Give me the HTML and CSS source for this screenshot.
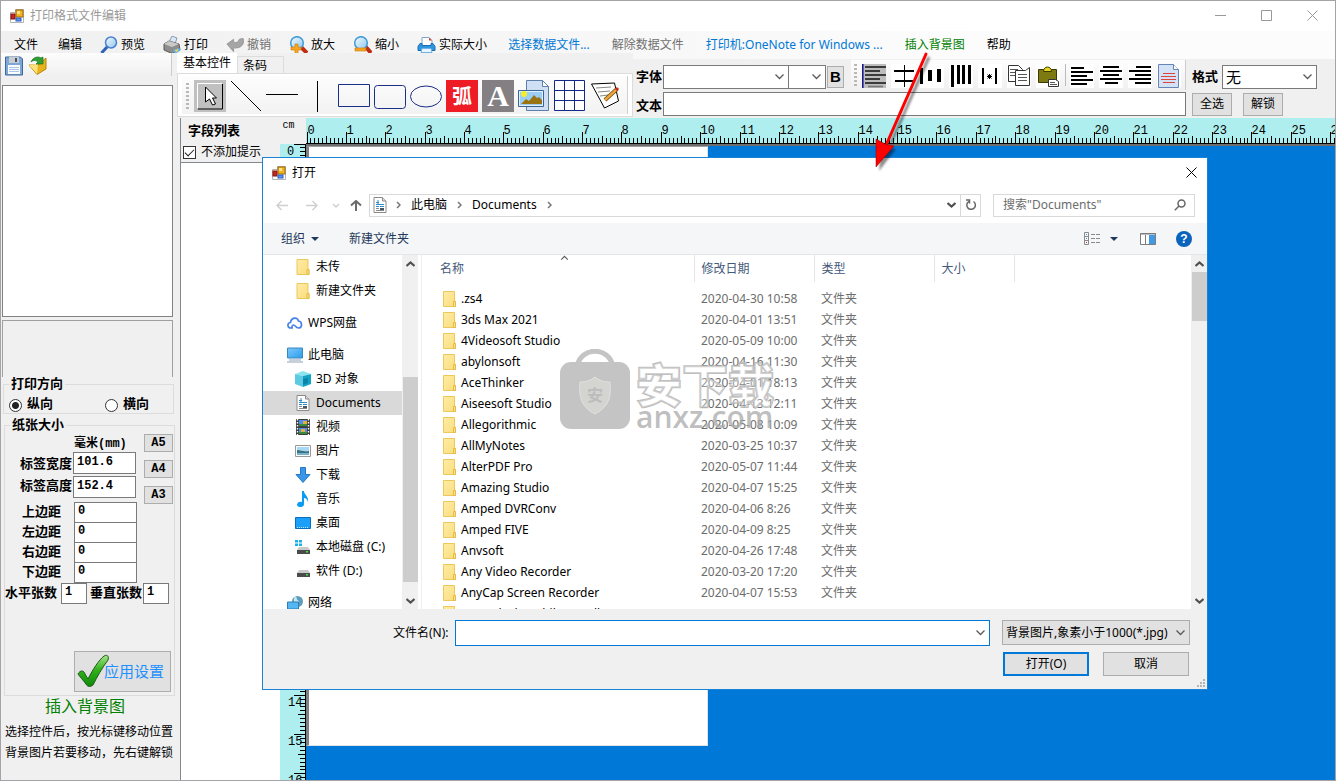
FILE: index.html
```html
<!DOCTYPE html>
<html lang="zh-CN">
<head>
<meta charset="utf-8">
<title>打印格式文件编辑</title>
<link rel="stylesheet" href="styles.css">
</head>
<body>
<svg class="sprite" aria-hidden="true">
  <defs>
    <linearGradient id="g-folder" x1="0" y1="0" x2="1" y2="1"><stop offset="0" stop-color="#ffeda6"/><stop offset="1" stop-color="#f9dc7c"/></linearGradient>
    <linearGradient id="g-glass" x1="0" y1="0" x2="1" y2="1"><stop offset="0" stop-color="#f4fbff"/><stop offset="1" stop-color="#8ec6ee"/></linearGradient>
    <linearGradient id="g-sky" x1="0" y1="0" x2="1" y2="1"><stop offset="0" stop-color="#7cc8f8"/><stop offset="1" stop-color="#2a9df0"/></linearGradient>
    <linearGradient id="g-check" x1="0" y1="0" x2="0" y2="1"><stop offset="0" stop-color="#a6e48c"/><stop offset=".45" stop-color="#35b21c"/><stop offset="1" stop-color="#0d8a08"/></linearGradient>
    <symbol id="i-app" viewBox="0 0 14 14"><path fill="#fff" stroke="#b4b4b4" d="M.5 3.500h5v-3h8v13H.5z"/><rect x="6" y="1" width="7" height="7" fill="#f4b422" stroke="#9d6c08"/><rect x="7" y="2" width="3" height="3" fill="#ffe28a"/><rect x="1" y="5" width="4" height="5" fill="#c62a1d" stroke="#8a120c"/><rect x="6" y="9" width="5" height="3" fill="#5d95ee" stroke="#2a5fc4"/></symbol>
    <symbol id="i-folder" viewBox="0 0 13 16"><path fill="url(#g-folder)" stroke="#ecc75a" d="M.5.5h11v10h1v5H.5z"/><path fill="#fbe28c" stroke="#e6bb45" d="M10.500 10.500h2v5h-2z"/></symbol>
    <symbol id="i-search" viewBox="0 0 18 18"><path d="M7.500 10.500 1.500 17" stroke="#2f62b4" stroke-width="3"/><circle cx="11" cy="6.500" r="5.500" fill="url(#g-glass)" stroke="#4b80cf" stroke-width="1.500"/></symbol>
    <symbol id="i-printer" viewBox="0 0 18 18"><path d="m6 6 3-6 5 2-2 6z" fill="#d8e6f5" stroke="#8a9bb0"/><path d="m1 8 5-3 10 3 1 6-8 3.500L1 14z" fill="#8d8d8d" stroke="#5b5b5b"/><path d="m1 8 5-3 10 3-7 3z" fill="#c9c9c9"/><path d="m10 14 6-2 2 2-6 4z" fill="#62b4e8"/><path d="m12 14 3-1v2l-2 1z" fill="#f5d23e"/></symbol>
    <symbol id="i-undo" viewBox="0 0 19 16"><path fill="#a5a5a5" stroke="#979797" d="m1 7 7-5v3c3 1 5 0 6-3l4-1c2 6-2 11-10 10v4z"/></symbol>
    <symbol id="i-zoomin" viewBox="0 0 19 18"><path d="m11 10 7 7" stroke="#c22c10" stroke-width="4"/><circle cx="8" cy="7" r="6.300" fill="url(#g-glass)" stroke="#3f9ad4" stroke-width="1.500"/><path fill="#f7a420" stroke="#c87a0b" stroke-width=".6" d="M6 8h3v3h3v3H9v4H6v-4H2v-3h4z"/></symbol>
    <symbol id="i-zoomout" viewBox="0 0 19 18"><path d="m12 10 6 7" stroke="#c22c10" stroke-width="4"/><circle cx="8" cy="7" r="6.300" fill="url(#g-glass)" stroke="#3f9ad4" stroke-width="1.500"/><path fill="#f7a420" stroke="#c87a0b" stroke-width=".6" d="M2 12h11v3H2z"/></symbol>
    <symbol id="i-print2" viewBox="0 0 19 17"><path fill="#fff" stroke="#7fa6cf" d="M5 1h7l3 3v5H5z"/><path d="M12 1v3h3z" fill="#d23b2b"/><path fill="#2f96dd" stroke="#1d6db2" d="M3 7h2v2h9V7h2l2 3v4H1v-4z"/><path fill="#e8f5ff" stroke="#6fb1e6" d="M5 12h9l1 4H4z"/></symbol>
    <symbol id="i-save" viewBox="0 0 20 20"><path fill="#7ca6d8" stroke="#3e679c" d="M1.500 1h15l2 2v16h-17z"/><path fill="#c9ccd0" d="M5 1h10v6H5z"/><path fill="#4a5058" d="M11 2h2v4h-2z"/><path fill="#fafdff" d="M4 9h12v9H4z"/><path d="M5 11.500h10M5 13.500h10M5 15.500h10" stroke="#a9c6e6"/></symbol>
    <symbol id="i-open" viewBox="0 0 20 20"><path fill="#e8b21c" stroke="#b98508" d="m1 9 8 9.500L18 13V2l-8 7z"/><path fill="#ffe27c" d="m1 9 8 9 1-10z"/><path fill="#2f9e33" stroke="#17711e" stroke-width=".7" d="M3 6C5 1 10 0 13 2l2-1v7H8l2-2C8 4 5 4 3 6z"/></symbol>
    <symbol id="i-doc" viewBox="0 0 14 16"><path fill="#fff" stroke="#8b8b8b" d="M1 .5h8.500L13 4v11.500H1z"/><path fill="#ddd" stroke="#8b8b8b" d="M9.500.5V4H13"/><path d="M3 5.500h3M3 7.500h8M3 9.500h3M7 9.500h4" stroke="#2a8cc9"/><path d="M5 3v4" stroke="#2a8cc9"/><path d="M3 11.500h3M3 13.500h8" stroke="#888"/><path fill="#456" d="M7 11h4v2H7z"/></symbol>
    <symbol id="i-cloud" viewBox="0 0 16 14"><path fill="none" stroke="#4a83e8" stroke-width="1.700" d="M6 12H4C0 12 0 7 3.500 6.500 4 2 10 0 11.500 5c4 .5 4 7 0 7-3 0-3-3-5-3-1.500 0-2 2-1 3"/></symbol>
    <symbol id="i-pc" viewBox="0 0 16 15"><path fill="url(#g-sky)" stroke="#3a86bd" d="M.5.500h15v10H.5z"/><path stroke="#8ba1b5" d="M2 12.500h12M0 14.500h16" /></symbol>
    <symbol id="i-cube" viewBox="0 0 16 16"><path fill="#8de4ef" d="m0 3 8-3 8 3-8 2z"/><path fill="#5ccbe2" d="m0 3 8 2v11l-8-3z"/><path fill="#12a2c4" d="m16 3-8 2v11l8-3z"/><path fill="#0c83a8" d="m8 8 5-1v5l-5 2z"/></symbol>
    <symbol id="i-video" viewBox="0 0 14 16"><path fill="#3e3e3e" d="M0 0h14v16H0z"/><path fill="#4d8ff0" d="M3 1h8v6H3zM3 9h8v6H3z"/><path fill="#e4b22c" d="M7 2h4v3H7zM5 10h4v3H5z"/><path fill="#3b8b3c" d="M3 5h8v2H3zM3 13h8v2H3z"/><path stroke="#fff" stroke-width="1.400" stroke-dasharray="1.500 1.500" d="M1.500 0v16M12.500 0v16"/></symbol>
    <symbol id="i-pic" viewBox="0 0 16 12"><path fill="#fff" stroke="#9a9a9a" d="M.5.500h15v11H.5z"/><path fill="#a7d8f5" d="M2 2h12v4H2z"/><path fill="#3a7381" d="M2 5c4 0 6 2 12 1v2H2z"/><path fill="#7ab3c9" d="M2 8h12v2H2z"/></symbol>
    <symbol id="i-down" viewBox="0 0 16 16"><path fill="#3a96e8" stroke="#2578c4" d="M5.500.5h5v7h4.500L8 15.500 1 7.500h4.500z"/></symbol>
    <symbol id="i-music" viewBox="0 0 12 16"><path fill="#0a9bf2" d="M5 0h2c0 4 5 5 4 11-1-3-2-4-4-4v6c0 4-6 4-7 1 0-3 3-4 5-3z"/></symbol>
    <symbol id="i-desktop" viewBox="0 0 16 12"><path fill="#1aa0f8" stroke="#0a6fbd" d="M.5.500h15v11H.5z"/><path stroke="#bfe3fb" stroke-dasharray="1 1" d="M2 10.500h12"/></symbol>
    <symbol id="i-drivec" viewBox="0 0 16 14"><path fill="#18b0ea" d="M0 0h3v2.500H0zM4 0h3v2.500H4zM0 3.500h3V6H0zM4 3.500h3V6H4z"/><path fill="#c9c9c9" d="m4 7-2 3h13l-2-3z"/><path fill="#4b4b4b" d="M2 10h13v4H2z"/><path fill="#43e04a" d="M11 11h2v1.500h-2z"/></symbol>
    <symbol id="i-drive" viewBox="0 0 16 14"><path fill="#c9c9c9" d="m4 6-2 3h13l-2-3z"/><path fill="#4b4b4b" d="M2 9h13v4H2z"/><path fill="#43e04a" d="M11 10h2v1.500h-2z"/></symbol>
    <symbol id="i-net" viewBox="0 0 16 15"><circle cx="10.500" cy="6" r="5.500" fill="#5d9dbd"/><path fill="#c8e6f2" d="M8 1c3 1 1 3 3 4s0 4-2 3-3-4-1-7z"/><path fill="#55b7f2" stroke="#2b7fb5" d="M.5 6.500h11v7H.5z"/></symbol>
    <symbol id="i-chev" viewBox="0 0 9 6"><path fill="none" stroke="#5a5a5a" stroke-width="1.300" d="m.500.5 4 4 4-4"/></symbol>
    <symbol id="i-arr" viewBox="0 0 9 6"><path fill="none" stroke="#505050" stroke-width="2.200" d="m.500 1 4 3.500L8.500 1"/></symbol>
    <symbol id="i-crumb" viewBox="0 0 5 8"><path fill="none" stroke="#767676" stroke-width="1.500" d="m1 1 3 3-3 3"/></symbol>
  </defs>
</svg>

<div class="window">
  <header class="titlebar">
    <svg class="app-icon"><use href="#i-app"/></svg>
    <h1 class="title">打印格式文件编辑</h1>
    <button class="caption" aria-label="最小化"><svg viewBox="0 0 11 11"><path d="M0 5.500h11"/></svg></button>
    <button class="caption" aria-label="最大化"><svg viewBox="0 0 11 11"><path d="M.5.500h10v10H.5z"/></svg></button>
    <button class="caption" aria-label="关闭"><svg viewBox="0 0 11 11"><path d="m.500.500 10 10M10.500.5l-10 10"/></svg></button>
  </header>

  <nav class="menubar">
    <button class="menu">文件</button>
    <button class="menu">编辑</button>
    <button class="menu with-icon"><svg><use href="#i-search"/></svg>预览</button>
    <button class="menu with-icon"><svg><use href="#i-printer"/></svg>打印</button>
    <button class="menu with-icon muted"><svg><use href="#i-undo"/></svg>撤销</button>
    <button class="menu with-icon wide"><svg><use href="#i-zoomin"/></svg>放大</button>
    <button class="menu with-icon wide"><svg><use href="#i-zoomout"/></svg>缩小</button>
    <button class="menu with-icon wide"><svg><use href="#i-print2"/></svg>实际大小</button>
    <button class="menu plain blue">选择数据文件...</button>
    <button class="menu plain muted">解除数据文件</button>
    <button class="menu plain blue">打印机:OneNote for Windows ...</button>
    <button class="menu plain green">插入背景图</button>
    <button class="menu plain">帮助</button>
  </nav>

  <div class="workspace">
    <aside class="sidebar">
      <div class="quickbar">
        <button class="quick" aria-label="保存"><svg><use href="#i-save"/></svg></button>
        <button class="quick" aria-label="打开"><svg><use href="#i-open"/></svg></button>
      </div>
      <div class="listbox"></div>
      <div class="infobox"></div>
      <fieldset class="group">
        <legend>打印方向</legend>
        <div class="radios">
          <label class="radio"><input type="radio" name="dir" checked>纵向</label>
          <label class="radio"><input type="radio" name="dir">横向</label>
        </div>
      </fieldset>
      <fieldset class="group paper">
        <legend>纸张大小</legend>
        <div class="paper-body">
          <div class="sizes">
            <span class="unit">毫米(mm)</span>
            <label for="w">标签宽度</label><input id="w" class="field" value="101.6">
            <label class="second" for="h">标签高度</label><input id="h" class="field second" value="152.4">
          </div>
          <div class="presets">
            <button class="btn preset">A5</button>
            <button class="btn preset">A4</button>
            <button class="btn preset">A3</button>
          </div>
        </div>
        <div class="margins">
          <label for="mt">上边距</label><input id="mt" class="field" value="0">
          <label for="ml">左边距</label><input id="ml" class="field" value="0">
          <label for="mr">右边距</label><input id="mr" class="field" value="0">
          <label for="mb">下边距</label><input id="mb" class="field" value="0">
        </div>
        <div class="counts">
          <label for="ch">水平张数</label><input id="ch" class="field" value="1">
          <label for="cv">垂直张数</label><input id="cv" class="field" value="1">
        </div>
        <button class="btn apply"><svg viewBox="0 0 32 32"><path fill="url(#g-check)" stroke="#1d5c1a" d="M1 19c2-4 6-4 7 0l3 5C16 14 22 5 27 1c4-2 5 1 4 4C25 13 20 22 16 30c-2 2-6 2-7-1C6 25 3 22 1 19z"/></svg>应用设置</button>
      </fieldset>
      <p class="hint-title">插入背景图</p>
      <p class="hint">选择控件后，按光标键移动位置</p>
      <p class="hint">背景图片若要移动，先右键解锁</p>
    </aside>

    <main class="main">
      <div class="topbar">
        <section class="tabs">
          <div class="tablist">
            <button class="tab active">基本控件</button>
            <button class="tab">条码</button>
          </div>
          <div class="tabpane">
            <div class="shapes">
              <i class="grip"></i>
              <button class="shape" aria-label="选择"><svg viewBox="0 0 32 32"><path fill="#c0c0c0" d="M0 0h32v32H0z"/><path fill="none" stroke="#000" d="M28.500 4v25H4"/><path fill="none" stroke="#fff" d="M3.500 28V3.500H28"/><path fill="#fff" stroke="#000" d="M11.500 7v15l4-3 3 6 3-1-3-6h4z"/></svg></button>
              <button class="shape" aria-label="斜线"><svg viewBox="0 0 32 32"><path stroke="#000" d="m1 1 30 30"/></svg></button>
              <button class="shape" aria-label="横线"><svg viewBox="0 0 32 32"><path stroke="#000" d="M0 14.500h32"/></svg></button>
              <button class="shape" aria-label="竖线"><svg viewBox="0 0 32 32"><path stroke="#000" d="M15.500 1v31"/></svg></button>
              <button class="shape" aria-label="矩形"><svg viewBox="0 0 32 32"><path fill="none" stroke="#1a2f86" d="M.5 4.500h31v22H.5z"/></svg></button>
              <button class="shape" aria-label="圆角矩形"><svg viewBox="0 0 32 32"><rect x=".5" y="5.500" width="31" height="23" rx="3" fill="none" stroke="#1a2f86"/></svg></button>
              <button class="shape" aria-label="椭圆"><svg viewBox="0 0 32 32"><ellipse cx="16" cy="16.500" rx="15.500" ry="10.500" fill="none" stroke="#1a2f86"/></svg></button>
              <button class="shape arc">弧</button>
              <button class="shape letter">A</button>
              <button class="shape" aria-label="图片"><svg viewBox="0 0 32 32"><path fill="#cfe0f4" stroke="#5f7fab" d="M8.500.500h16l6 6v24h-22z"/><path fill="#fff" stroke="#5f7fab" d="M24.500.500v6h6z"/><path fill="#dff0ff" stroke="#3b6394" d="M.5 10.500h25v16H.5z"/><path fill="#9ccdf3" d="M2 12h22v13H2z"/><circle cx="6" cy="14" r="3" fill="#f7ee2b"/><path fill="#9a7413" d="m3 24 5-5 3 2 5-6 3 3 2-1 3 3v4z"/></svg></button>
              <button class="shape" aria-label="表格"><svg viewBox="0 0 32 32"><path fill="#fff" stroke="#12298a" d="M.5.500h30v30H.5zM.5 10.500h30M.5 20.500h30M10.500.500v30M20.500.500v30"/></svg></button>
              <button class="shape" aria-label="备注"><svg viewBox="0 0 32 32"><path fill="#fff" stroke="#000" d="m1.500 4 23-1 4 18-14 7z"/><path stroke="#888" d="m6 8 15-1M8 12l12-1M10 16l8-1"/><path stroke="#6e4610" stroke-width="4" d="m15 20 12-11"/><path stroke="#e9a63a" stroke-width="2.500" d="m15 20 12-11"/><path stroke="#c5281c" stroke-width="3" d="m26 10 2-2"/></svg></button>
            </div>
          </div>
        </section>

        <section class="texttools">
          <div class="row">
            <label class="bold" for="font">字体</label>
            <span class="select font"><select id="font"><option></option></select><svg><use href="#i-chev"/></svg></span>
            <span class="select size"><select aria-label="字号"><option></option></select><svg><use href="#i-chev"/></svg></span>
            <button class="btn boldbtn">B</button>
            <div class="align">
              <i class="grip"></i>
              <button class="tool" aria-label="左对齐控件"><svg viewBox="0 0 24 24"><path fill="#bdbdbd" d="M0 0h24v24H0z"/><path stroke="#10108a" stroke-width="1.500" d="M.8 0v24"/><path stroke="#111" stroke-width="1.600" d="M3 3h21M3 7h15M3 11h21M3 15h15M3 19h21"/><path stroke="#777" stroke-width="1.600" d="M6 22.500h15"/></svg></button>
              <button class="tool" aria-label="居中控件"><svg viewBox="0 0 24 24"><path stroke="#000" stroke-width="2" d="M3 7h20M4 17h19"/><path stroke="#000" d="M13.500 1v22"/></svg></button>
              <button class="tool" aria-label="横向分布"><svg viewBox="0 0 24 24"><path stroke="#000" stroke-width="3" d="M1.500 4v16"/><path stroke="#000" stroke-width="4" d="M10 6v11M19 5v13"/></svg></button>
              <button class="tool" aria-label="纵向分布"><svg viewBox="0 0 24 24"><path stroke="#000" stroke-width="3" d="M3.500 1v22"/><path stroke="#000" stroke-width="3" d="M9.500 1v19M14.500 1v19M20.500 1v19"/></svg></button>
              <button class="tool" aria-label="间距"><svg viewBox="0 0 24 24"><path stroke="#000" stroke-width="2" d="M5 4v16M18 4v16"/><path stroke="#000" d="M9 12.500h5M11.500 10v5M9.500 10.500l4 4M13.500 10.500l-4 4"/></svg></button>
              <button class="tool" aria-label="复制"><svg viewBox="0 0 24 24"><path fill="#fff" stroke="#333" d="M1.500 1.500h10l4 4v12h-14z"/><path stroke="#555" d="M3 5.500h8M3 8.500h10M3 11.500h10"/><path fill="#fff" stroke="#333" d="M8.500 6.500h10l4-3v18h-14z"/><path stroke="#555" d="M11 10.500h9M11 13.500h9M11 16.500h9"/></svg></button>
              <button class="tool" aria-label="粘贴"><svg viewBox="0 0 24 24"><path fill="#7d7a12" stroke="#3d3b05" d="M2.500 5.500h18v13h-18z"/><path fill="#e8d61c" stroke="#3d3b05" d="M7.500 7.500c0-6 8-6 8 0z"/><path fill="#fff" stroke="#333" d="M12.500 15.500h7l3 2v5h-10z"/><path stroke="#555" d="M14 18.500h5M14 20.500h7"/></svg></button>
              <i class="sep"></i>
              <button class="tool" aria-label="文本左对齐"><svg viewBox="0 0 24 24"><path stroke="#000" stroke-width="2" d="M1 4h13M1 8h22M1 12h16M1 16h22M1 20h16"/></svg></button>
              <button class="tool" aria-label="文本居中"><svg viewBox="0 0 24 24"><path stroke="#000" stroke-width="2" d="M4 3h16M1 7h22M4 11h16M1 15h22M6 19h13"/></svg></button>
              <button class="tool" aria-label="文本右对齐"><svg viewBox="0 0 24 24"><path stroke="#000" stroke-width="2" d="M8 3h15M1 7h22M7 11h16M1 15h22M7 19h16"/></svg></button>
              <button class="tool" aria-label="文档"><svg viewBox="0 0 24 24"><path fill="#d3e2f5" stroke="#6485b5" d="M1.500.500h15l5 5v18h-20z"/><path fill="#fff" stroke="#6485b5" d="M16.500.500v5h5"/><path stroke="#d44" d="M6 9.500h12M4 12.500h15M4 15.500h15M6 18.500h12"/></svg></button>
            </div>
            <label class="bold fmt" for="fmt">格式</label>
            <span class="select format"><select id="fmt"><option>无</option></select><svg><use href="#i-chev"/></svg></span>
          </div>
          <div class="row second-row">
            <label class="bold" for="txt">文本</label>
            <input id="txt" class="textline">
            <button class="btn small">全选</button>
            <button class="btn small">解锁</button>
          </div>
        </section>
      </div>

      <div class="stage">
        <section class="fields">
          <h2 class="bold">字段列表</h2>
          <label class="check"><input type="checkbox" checked>不添加提示</label>
          <div class="fieldlist"></div>
        </section>
        <div class="canvas">
          <span class="cm">cm</span>
          <svg class="ruler-x" id="ruler-x"></svg>
          <svg class="ruler-y" id="ruler-y"></svg>
          <div class="view"><div class="page"></div></div>
        </div>
      </div>
    </main>
  </div>
</div>

<section class="dialog" role="dialog" aria-label="打开">
  <header class="dlg-title">
    <svg class="app-icon"><use href="#i-app"/></svg>
    <span>打开</span>
    <button class="dlg-close" aria-label="关闭"><svg viewBox="0 0 11 11"><path stroke="#000" d="m.500.500 10 10M10.500.5l-10 10"/></svg></button>
  </header>
  <div class="navrow">
    <button class="nav" aria-label="后退"><svg viewBox="0 0 12 11"><path stroke="#d0d0d0" d="M12 5.500H1M5.500 1 1 5.500 5.500 10"/></svg></button>
    <button class="nav" aria-label="前进"><svg viewBox="0 0 12 11"><path stroke="#d0d0d0" d="M0 5.500h11M6.500 1 11 5.500 6.500 10"/></svg></button>
    <button class="nav narrow" aria-label="最近"><svg viewBox="0 0 12 11"><path stroke="#d0d0d0" d="m3 4 3 3 3-3"/></svg></button>
    <button class="nav" aria-label="向上"><svg viewBox="0 0 12 11"><path stroke="#6b6b6b" stroke-width="2" d="M6 11V1M1 5.500 6 1l5 4.500"/></svg></button>
    <div class="address">
      <svg class="doc"><use href="#i-doc"/></svg>
      <svg class="crumb"><use href="#i-crumb"/></svg><span>此电脑</span>
      <svg class="crumb"><use href="#i-crumb"/></svg><span>Documents</span>
      <svg class="crumb"><use href="#i-crumb"/></svg>
      <svg class="drop"><use href="#i-arr"/></svg>
      <button class="refresh" aria-label="刷新"><svg viewBox="0 0 12 12"><path fill="none" stroke="#666" stroke-width="1.500" d="M8.500 2.500A4.300 4.300 0 1 1 4 2.300"/><path fill="none" stroke="#666" stroke-width="1.500" d="M1 1h3.500v3.500"/></svg></button>
    </div>
    <div class="search"><input aria-label="搜索" placeholder='搜索"Documents"'><svg viewBox="0 0 12 12"><circle cx="7.500" cy="4.500" r="3.500"/><path d="M5 7 .8 11.200"/></svg></div>
  </div>
  <div class="cmdbar">
    <button class="cmd">组织<svg viewBox="0 0 8 4"><path fill="#1e395b" d="M0 0h8L4 4z"/></svg></button>
    <button class="cmd">新建文件夹</button>
    <button class="cmd view-btn" aria-label="视图"><svg class="v" viewBox="0 0 16 13"><path fill="none" stroke="#8a8a8a" d="M.5.500h4v12h-4zM.5 4.500h4M.5 8.500h4M7 2.500h4M12 2.500h4M7 6.500h4M12 6.500h4M7 10.500h4M12 10.500h4"/><path fill="#c33" d="M2 10h1v1H2z"/><path fill="#4a90d9" d="M2 2h1v1H2zM2 6h1v1H2z"/></svg><svg viewBox="0 0 8 4"><path fill="#1e395b" d="M0 0h8L4 4z"/></svg></button>
    <button class="cmd" aria-label="预览窗格"><svg class="p" viewBox="0 0 16 12"><path fill="#fff" stroke="#7c7c7c" d="M.5.500h15v11H.5zM5.500 2v9"/><path fill="#3f9be8" d="M9 2h6v9H9z"/><path stroke="#7c7c7c" d="M0 1h16"/></svg></button>
    <button class="help" aria-label="帮助">?</button>
  </div>
  <div class="dlg-body">
    <ul class="tree">
      <li class="l2"><svg><use href="#i-folder"/></svg>未传</li>
      <li class="l2"><svg><use href="#i-folder"/></svg>新建文件夹</li>
      <li class="top"><svg><use href="#i-cloud"/></svg>WPS网盘</li>
      <li class="top"><svg><use href="#i-pc"/></svg>此电脑</li>
      <li class="l2"><svg><use href="#i-cube"/></svg>3D 对象</li>
      <li class="l2 selected"><svg><use href="#i-doc"/></svg>Documents</li>
      <li class="l2"><svg><use href="#i-video"/></svg>视频</li>
      <li class="l2"><svg><use href="#i-pic"/></svg>图片</li>
      <li class="l2"><svg><use href="#i-down"/></svg>下载</li>
      <li class="l2"><svg><use href="#i-music"/></svg>音乐</li>
      <li class="l2"><svg><use href="#i-desktop"/></svg>桌面</li>
      <li class="l2"><svg><use href="#i-drivec"/></svg>本地磁盘 (C:)</li>
      <li class="l2"><svg><use href="#i-drive"/></svg>软件 (D:)</li>
      <li class="top"><svg><use href="#i-net"/></svg>网络</li>
    </ul>
    <div class="scroll tree-scroll"><svg class="up"><use href="#i-arr"/></svg><i class="thumb"></i><svg><use href="#i-arr"/></svg></div>
    <div class="files">
      <table>
        <colgroup><col class="c-name"><col class="c-date"><col class="c-type"><col class="c-size"><col></colgroup>
        <thead><tr><th>名称<svg class="sort"><use href="#i-chev"/></svg></th><th>修改日期</th><th>类型</th><th>大小</th><th></th></tr></thead>
        <tbody>
          <tr><td><svg><use href="#i-folder"/></svg>.zs4</td><td>2020-04-30 10:58</td><td>文件夹</td><td></td><td></td></tr>
          <tr><td><svg><use href="#i-folder"/></svg>3ds Max 2021</td><td>2020-04-01 13:51</td><td>文件夹</td><td></td><td></td></tr>
          <tr><td><svg><use href="#i-folder"/></svg>4Videosoft Studio</td><td>2020-05-09 10:00</td><td>文件夹</td><td></td><td></td></tr>
          <tr><td><svg><use href="#i-folder"/></svg>abylonsoft</td><td>2020-04-16 11:30</td><td>文件夹</td><td></td><td></td></tr>
          <tr><td><svg><use href="#i-folder"/></svg>AceThinker</td><td>2020-04-01 18:13</td><td>文件夹</td><td></td><td></td></tr>
          <tr><td><svg><use href="#i-folder"/></svg>Aiseesoft Studio</td><td>2020-04-13 12:11</td><td>文件夹</td><td></td><td></td></tr>
          <tr><td><svg><use href="#i-folder"/></svg>Allegorithmic</td><td>2020-05-08 10:09</td><td>文件夹</td><td></td><td></td></tr>
          <tr><td><svg><use href="#i-folder"/></svg>AllMyNotes</td><td>2020-03-25 10:37</td><td>文件夹</td><td></td><td></td></tr>
          <tr><td><svg><use href="#i-folder"/></svg>AlterPDF Pro</td><td>2020-05-07 11:44</td><td>文件夹</td><td></td><td></td></tr>
          <tr><td><svg><use href="#i-folder"/></svg>Amazing Studio</td><td>2020-04-07 15:25</td><td>文件夹</td><td></td><td></td></tr>
          <tr><td><svg><use href="#i-folder"/></svg>Amped DVRConv</td><td>2020-04-06 8:26</td><td>文件夹</td><td></td><td></td></tr>
          <tr><td><svg><use href="#i-folder"/></svg>Amped FIVE</td><td>2020-04-09 8:25</td><td>文件夹</td><td></td><td></td></tr>
          <tr><td><svg><use href="#i-folder"/></svg>Anvsoft</td><td>2020-04-26 17:48</td><td>文件夹</td><td></td><td></td></tr>
          <tr><td><svg><use href="#i-folder"/></svg>Any Video Recorder</td><td>2020-03-20 17:20</td><td>文件夹</td><td></td><td></td></tr>
          <tr><td><svg><use href="#i-folder"/></svg>AnyCap Screen Recorder</td><td>2020-04-07 15:53</td><td>文件夹</td><td></td><td></td></tr>
          <tr><td><svg><use href="#i-folder"/></svg>AnyUnlock Mobile Install</td><td></td><td></td><td></td><td></td></tr>
        </tbody>
      </table>
      <div class="watermark">
        <svg viewBox="0 0 70 80"><path fill="none" stroke="#c4c4c4" stroke-width="5" d="M17 18C20-3 50-3 53 18"/><rect y="13" width="70" height="67" rx="11" fill="#c4c4c4"/><path fill="#d4d4d0" stroke="#e2e2e2" d="M35 28c5 4 10 5 15 5 1 14 0 24-15 32C20 57 19 47 20 33c5 0 10-1 15-5z"/></svg>
        <span class="wm-badge">安</span>
        <div class="wm-text"><b>安下载</b><span>anxz.com</span></div>
      </div>
    </div>
    <div class="scroll file-scroll"><svg class="up"><use href="#i-arr"/></svg><i class="thumb"></i><svg><use href="#i-arr"/></svg></div>
  </div>
  <footer class="dlg-foot">
    <label for="fn">文件名(N):</label>
    <span class="select filename"><input id="fn"><svg><use href="#i-chev"/></svg></span>
    <div class="foot-right">
      <span class="select filter"><select aria-label="文件类型"><option>背景图片,象素小于1000(*.jpg)</option></select><svg><use href="#i-chev"/></svg></span>
      <div class="actions">
        <button class="btn action primary">打开(O)</button>
        <button class="btn action">取消</button>
      </div>
    </div>
    <svg class="resize" viewBox="0 0 8 8"><path fill="#b5b5b5" d="M6 0h2v2H6zM3 3h2v2H3zM6 3h2v2H6zM0 6h2v2H0zM3 6h2v2H3zM6 6h2v2H6z"/></svg>
  </footer>
</section>

<svg class="pointer" viewBox="0 0 80 130" aria-hidden="true">
  <g class="shadow"><path d="M61 6 23 92" stroke="#000" stroke-width="3"/><path d="m11 120 3-28 7 5 7 1z"/></g>
  <path d="M58 3 19 92" stroke="#f00" stroke-width="3" stroke-linecap="round"/><path fill="#f00" stroke="#800" stroke-width=".5" d="M8 116 8 88l9 5 9 2z"/>
</svg>
<script src="ruler.js"></script>
</body>
</html>
```
FILE: styles.css
```css
* { box-sizing: border-box; }
html, body { height: 100%; margin: 0; overflow: hidden; }
body {
  font: 12px/16px "Noto Sans", "Noto Sans CJK SC", sans-serif;
  color: #000;
  background: #f0f0f0;
}
button, input, select { font: inherit; color: inherit; margin: 0; padding: 0; border: 0; border-radius: 0; background: none; }
h1, h2, p, ul { margin: 0; padding: 0; font: inherit; }
svg { display: block; flex: none; }
.sprite { position: absolute; width: 0; height: 0; }
.bold { font: bold 13px/16px "Liberation Mono", "Noto Sans CJK SC", monospace; white-space: nowrap; }

.window { display: flex; flex-direction: column; height: 100vh; border: 1px solid #a4a4a8; }
.titlebar { display: flex; align-items: center; height: 30px; flex: none; background: #fff; padding: 0 0 1px 9px; }
.app-icon { width: 14px; height: 14px; }
.title { flex: 1; margin-left: 6px; color: #999; }
.caption { display: grid; place-items: center; width: 46px; height: 27px; }
.caption svg { width: 11px; height: 11px; fill: none; stroke: #999; }

.menubar { display: flex; align-items: center; height: 28px; flex: none; padding-left: 13px; gap: 20px; background: linear-gradient(90deg, #f0f0f0, #fcfcfc 75%); }
.menu { display: flex; align-items: center; gap: 3px; white-space: nowrap; }
.with-icon { margin-left: -2px; }
.with-icon svg { width: 18px; height: 18px; }
.wide svg { width: 19px; }
.plain { padding: 0 1px; }
.muted { color: #707070; }
.blue { color: #0078d7; }
.green { color: #008000; }

.workspace { display: flex; flex: 1; min-height: 0; margin-top: -6px; }
.sidebar { width: 179px; flex: none; background: #f0f0f0; }
.quickbar { display: flex; gap: 4px; width: 171px; height: 23px; padding: 3px 3px 0; border-right: 1px solid #ccc; background: linear-gradient(#fdfdfd, #f0f0f0); }
.quick { height: 20px; }
.quick svg { width: 20px; height: 20px; }
.listbox { width: 171px; height: 232px; margin: 9px 0 0 1px; border: 1px solid #828282; background: #fff; }
.infobox { width: 171px; height: 57px; margin: 3px 0 0 1px; border: 1px solid #a0a0a0; border-bottom: 0; }

.group { width: 171px; margin: 0 0 4px 2px; padding: 0; border: 1px solid #dcdcdc; min-width: 0; height: 37px; font: bold 13px/16px "Liberation Mono", "Noto Sans CJK SC", monospace; }
.group legend { margin-left: 5px; padding: 0 2px; line-height: 15px; }
.radios { display: flex; padding: 5px 0 0 5px; }
.radio { display: flex; align-items: center; gap: 5px; height: 16px; flex: none; }
.radio:first-child { width: 96px; }
.radio input { appearance: none; width: 13px; height: 13px; border: 1px solid #333; border-radius: 50%; background: #fff; }
.radio input:checked { background: radial-gradient(circle, #222 0 3px, #fff 4px); }
.paper { height: 278px; margin: 0 0 0 3px; }
.group label { white-space: nowrap; }
.paper-body { display: flex; padding-top: 1px; justify-content: space-between; padding-right: 1px; }
.sizes { display: grid; grid-template-columns: 68px 63px; grid-template-rows: 18px 22px 24px; }
.sizes .unit { grid-column: 1 / 3; padding-left: 69px; line-height: 21px; white-space: nowrap; font-size: 12px; }
.sizes label { text-align: right; padding-right: 1px; line-height: 26px; }
.field { border: 1px solid #7a7a7a; background: #fff; padding: 0 2px 3px 3px; min-width: 0; font: bold 12px/16px "Liberation Mono", monospace; }
.sizes .second { margin-top: 2px; }
.sizes label.second { line-height: 22px; }
.presets { display: grid; gap: 8px; }
.btn { border: 1px solid #adadad; background: #e1e1e1; text-align: center; white-space: nowrap; }
.preset { width: 29px; height: 18px; font: bold 12px/14px "Liberation Mono", monospace; }
.margins { display: grid; grid-template-columns: 52px 63px; column-gap: 17px; grid-auto-rows: 20px; margin-top: -2px; }
.margins label { padding-left: 17px; line-height: 22px; }
.margins .field { height: 21px; }
.counts { display: flex; align-items: center; margin-top: 1px; height: 21px; }
.counts label { width: 56px; }
.counts label + .field + label { width: 53px; }
.counts .field { width: 26px; height: 21px; }
.counts .field:first-of-type { margin-right: 3px; }
.apply { display: flex; align-items: center; width: 97px; height: 41px; margin: 47px 0 0 69px; padding: 0 0 2px 2px; font: 15px/20px "Noto Sans CJK SC", sans-serif; color: #1e90ff; }
.apply svg { width: 32px; height: 34px; margin-right: -5px; }
.hint-title { margin: 0 0 5px 44px; font-size: 16px; line-height: 20px; color: #008000; }
.hint { margin-left: 4px; line-height: 21px; white-space: nowrap; }

.main { display: flex; flex-direction: column; flex: 1; min-width: 0; }
.topbar { display: flex; height: 65px; flex: none; }
.tabs { width: 456px; flex: none; background: #f0f0f0; margin-left: -3px; height: 64px; }
.tablist { display: flex; align-items: flex-end; height: 20px; }
.tab { height: 17px; padding: 0 16px 0 5px; border: 1px solid #dcdcdc; border-bottom: 0; line-height: 18px; }
.tab.active { height: 20px; padding: 0 6px 0 6px; background: #fff; border: 0; }
.tabpane { height: 44px; border: 1px solid #dcdcdc; background: #fff; padding: 2px 4px; }
.shapes { display: flex; align-items: center; height: 38px; gap: 4px; background: linear-gradient(#fdfdfd, #f2f2f2); border-right: 1px solid #d0d0d0; padding: 2px 0 0 4px; }
.shape { display: block; width: 32px; height: 32px; }
.shape svg { width: 32px; height: 32px; }
.grip { width: 3px; height: 27px; margin-right: 1px; background: repeating-linear-gradient(#b8b8b8 0 2px, transparent 2px 4px); }
.arc { background: #ee1c24; color: #fff; font: bold 20px/30px "Noto Sans CJK SC", sans-serif; }
.letter { background: #847f83; color: #fff; font: bold 30px/32px "Liberation Serif", serif; }

.texttools { padding: 7px 0 0 3px; flex: 1; min-width: 0; }
.row { display: flex; align-items: center; height: 30px; }
.row > label { width: 27px; flex: none; padding-top: 5px; }
.select { display: grid; grid-template-columns: minmax(0, 1fr) auto; align-items: center; border: 1px solid #7a7a7a; background: #fff; flex: none; }
.select > select, .select > input { grid-area: 1 / 1 / 2 / 3; width: 100%; height: 100%; appearance: none; outline: 0; padding-left: 3px; }
.select > svg { grid-area: 1 / 2; width: 9px; height: 6px; margin-right: 4px; pointer-events: none; }
.font { width: 126px; height: 24px; margin-top: 3px; }
.size { width: 38px; height: 24px; margin: 3px 0 0 -1px; }
.boldbtn { width: 17px; height: 22px; margin: 3px 0 0 1px; font: bold 15px/18px "Liberation Sans", sans-serif; }
.align { display: flex; align-items: center; gap: 5px; height: 30px; width: 335px; flex: none; margin-left: 7px; padding-left: 3px; background: linear-gradient(#fdfdfd, #f0f0f0); border-right: 1px solid #ccc; }
.align .grip { margin-right: 0; height: 23px; }
.tool { width: 24px; height: 24px; flex: none; margin-top: 2px; background: #fff; }
.tool svg { width: 24px; height: 24px; fill: none; }
.sep { width: 1px; height: 22px; background: #bbb; margin-right: -1px; }
.row > .fmt { width: 30px; margin-left: 6px; }
.format { width: 95px; height: 24px; margin-top: 3px; font-size: 15px; }
.second-row { height: 24px; margin-top: 2px; }
.textline { flex: 0 1 523px; min-width: 0; height: 24px; border: 1px solid #7a7a7a; background: #fff; margin-right: 6px; }
.small { width: 40px; height: 23px; margin-right: 11px; flex: none; }

.stage { display: flex; flex: 1; min-height: 0; }
.fields { display: flex; flex-direction: column; width: 100px; flex: none; border-left: 1px solid #828790; }
.fields h2 { margin: 6px 0 0 7px; }
.check { display: flex; align-items: center; gap: 5px; margin: 4px 0 2px 2px; white-space: nowrap; height: 16px; }
.check input { appearance: none; width: 13px; height: 13px; flex: none; border: 1px solid #333; display: grid; place-items: center; background: #fff; }
.check input::before { content: ""; width: 8px; height: 4px; border: solid #222; border-width: 0 0 1px 1px; rotate: -45deg; translate: 0 -1px; }
.fieldlist { flex: 1; background: #fff; border-top: 1px solid #828790; }
.canvas { display: grid; grid-template: 26px minmax(0, 1fr) / 26px minmax(0, 1fr); flex: 1; min-width: 0; }
.cm { font: 10px/16px "Liberation Mono", monospace; text-align: center; padding-right: 9px; }
.ruler-x, .ruler-y { width: 100%; height: 100%; background: #afeeee; overflow: hidden; font: 12px "Liberation Mono", monospace; }
.ruler-x path, .ruler-y path { fill: none; stroke: #000; shape-rendering: crispEdges; }
.view { background: #0078d7; border-top: 2px solid #6e6e6e; overflow: hidden; }
.page { width: 402px; height: 600px; background: #fff; border: 1px solid #e3e3e3; border-left: 3px solid #808080; border-top-color: #a0a0a0; }

.dialog { position: absolute; left: 262px; top: 157px; width: 946px; display: flex; flex-direction: column; border: 1px solid #1883d7; background: #fff; }
.dlg-title { display: flex; align-items: center; gap: 6px; height: 29px; padding: 0 10px 0 9px; }
.dlg-close { margin-left: auto; }
.dlg-close svg { width: 11px; height: 11px; }
.navrow { display: flex; align-items: center; height: 36px; padding: 1px 12px 1px 13px; }
.nav { width: 30px; }
.nav svg { width: 12px; height: 11px; fill: none; stroke-width: 1.500; }
.nav.narrow { width: 14px; margin-left: -6px; }
.nav:nth-child(4) { width: 19px; margin-left: 6px; }
.address { display: flex; align-items: center; flex: 1; height: 23px; border: 1px solid #d9d9d9; padding-left: 3px; }
.address .doc { width: 14px; height: 16px; margin-right: 9px; }
.crumb { width: 5px; height: 8px; margin-right: 10px; }
.address span { margin-right: 10px; }
.drop { width: 9px; height: 6px; margin-left: auto; margin-right: 4px; }
.refresh { display: grid; place-items: center; width: 20px; height: 21px; border-left: 1px solid #d9d9d9; }
.refresh svg { width: 12px; height: 12px; }
.search { display: flex; align-items: center; width: 202px; height: 23px; margin-left: 12px; border: 1px solid #d9d9d9; padding: 0 8px 0 9px; }
.search input { flex: 1; min-width: 0; }
.search input::placeholder { color: #6d6d6d; opacity: 1; }
.search svg { width: 12px; height: 12px; fill: none; stroke: #666; stroke-width: 1.500; }
.cmdbar { display: flex; align-items: center; height: 32px; background: #f5f6f7; border-bottom: 1px solid #e4e6e8; padding: 0 15px 0 18px; color: #1e395b; }
.cmd { display: flex; align-items: center; gap: 6px; margin-right: 30px; }
.cmd svg { width: 8px; height: 4px; }
.cmd.view-btn { margin-left: auto; margin-right: 22px; gap: 10px; }
.cmd .v { width: 16px; height: 13px; }
.cmd .p { width: 16px; height: 12px; }
.cmd:nth-child(4) { margin-right: 20px; }
.help { width: 16px; height: 16px; border-radius: 50%; background: #0a63bd; color: #fff; font: bold 12px/16px "Liberation Sans", sans-serif; }

.dlg-body { display: flex; height: 354px; overflow: hidden; }
.tree { width: 139px; flex: none; list-style: none; white-space: nowrap; }
.tree li { display: flex; align-items: center; height: 24px; gap: 5px; padding-left: 24px; }
.tree li svg { width: 16px; height: 16px; }
.tree li.l2 { padding-left: 32px; }
.tree li.top { margin-top: 8px; }
.tree li.selected { background: #d9d9d9; }
.scroll { display: flex; flex-direction: column; align-items: center; width: 16px; flex: none; background: #f0f0f0; padding: 6px 0 5px; }
.scroll svg { width: 9px; height: 6px; }
.scroll .up { rotate: 180deg; }
.scroll .thumb { width: 15px; background: #cdcdcd; }
.tree-scroll .thumb { height: 205px; margin: auto 0 16px; }
.file-scroll .thumb { height: 49px; margin: 5px 0 auto; }
.files { position: relative; flex: 1; min-width: 0; border-left: 1px solid #eee; margin-left: 3px; overflow: hidden; }
.files table { table-layout: fixed; width: 100%; border-collapse: collapse; }
.c-name { width: 272px; }
.c-date, .c-type { width: 120px; }
.c-size { width: 80px; }
.files th { height: 27px; padding: 0 0 0 7px; text-align: left; font-weight: normal; color: #44597a; border-right: 1px solid #e5e5e5; }
.files th:first-child { padding-left: 18px; }
.files th:last-child { border: 0; }
.sort { width: 9px; height: 5px; rotate: 180deg; position: absolute; left: 138px; top: 0; }
.files tbody::before { content: ""; display: block; height: 6px; }
.files td { height: 21px; padding: 0 0 0 7px; color: #6d6d6d; white-space: nowrap; line-height: 16px; }
.files td:first-child { padding-left: 21px; color: #000; }
.files td svg { display: inline-block; width: 13px; height: 16px; margin-right: 5px; vertical-align: top; }
.watermark { position: absolute; left: 138px; top: 94px; display: flex; color: #c4c4c4; pointer-events: none; }
.watermark svg { width: 70px; height: 80px; }
.wm-badge { position: absolute; left: 27px; top: 38px; font-weight: bold; font-size: 16px; color: #bcbcbc; }
.wm-text { margin: 10px 0 0 6px; white-space: nowrap; }
.wm-text b { display: block; font: 900 46px/46px "Noto Sans CJK SC", sans-serif; color: rgba(255, 255, 255, .3); -webkit-text-stroke: 2px rgba(180, 180, 180, .85); paint-order: stroke; }
.wm-text span { display: block; font: 600 30px/24px "Open Sans", sans-serif; color: rgba(170, 170, 170, .75); }

.dlg-foot { position: relative; display: flex; align-items: flex-start; background: #f0f0f0; padding: 11px 17px 13px 130px; }
.dlg-foot label { line-height: 25px; margin-right: 6px; white-space: nowrap; }
.filename { flex: 1; height: 26px; border-color: #0078d7; }
.foot-right { width: 188px; margin-left: 12px; flex: none; }
.filter { height: 25px; border-color: #adadad; background: #e1e1e1; }
.actions { display: flex; justify-content: space-between; margin: 7px 1px 0; }
.action { width: 86px; height: 24px; }
.primary { border: 2px solid #0078d7; }
.resize { position: absolute; right: 2px; bottom: 2px; width: 8px; height: 8px; }
.pointer { position: absolute; left: 868px; top: 51px; width: 80px; height: 130px; pointer-events: none; }
.pointer .shadow { opacity: .45; filter: blur(1px); }
```
FILE: ruler.js
```js
const NS = "http://www.w3.org/2000/svg";
const PX_PER_CM = 39.37;

function drawRuler(svg, horizontal) {
  const box = svg.getBoundingClientRect();
  const length = horizontal ? box.width : box.height;
  const steps = Math.floor(length * 10 / PX_PER_CM);
  let d = horizontal ? `M0 25.5H${length}` : `M25.5 0V${length}`;
  for (let mm = 0; mm <= steps; mm++) {
    const at = Math.floor(mm * PX_PER_CM / 10) + 0.5 + (horizontal ? 1 : 0);
    const len = mm % 10 === 0 ? 11 : mm % 5 === 0 ? 7 : 5;
    d += horizontal ? `M${at} ${25 - len}V25` : `M${25 - len} ${at}H25`;
    if (mm % 10 === 0) {
      const text = document.createElementNS(NS, "text");
      text.textContent = mm / 10;
      text.setAttribute("x", horizontal ? at : mm < 100 ? 7 : 8);
      text.setAttribute("y", horizontal ? 16 : at + 10);
      svg.appendChild(text);
    }
  }
  const path = document.createElementNS(NS, "path");
  path.setAttribute("d", d);
  svg.appendChild(path);
}

drawRuler(document.getElementById("ruler-x"), true);
drawRuler(document.getElementById("ruler-y"), false);
```
